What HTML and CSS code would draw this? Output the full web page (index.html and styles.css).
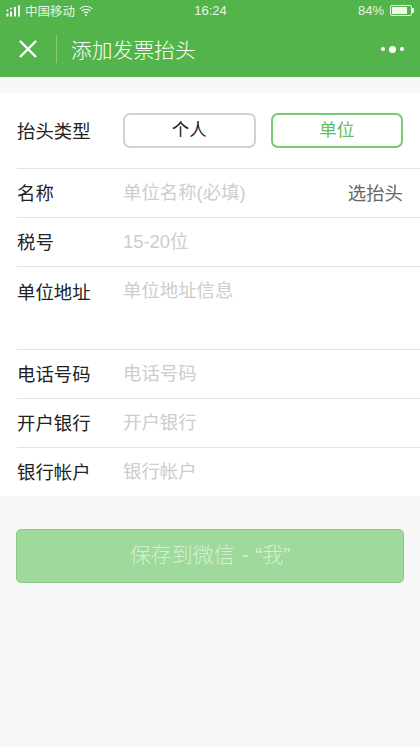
FILE: index.html
```html
<!DOCTYPE html>
<html lang="zh-CN">
<head>
  <meta charset="UTF-8">
  <meta name="viewport" content="width=device-width, initial-scale=1.0">
  <title>添加发票抬头</title>
  <link rel="stylesheet" href="styles.css">
</head>
<body>

  <div class="header">
    <div class="status-bar">
      <div class="status-left">
        <svg class="signal" width="15" height="12" viewBox="0 0 15 12">
          <rect x="0.5" y="8.5" width="2" height="3" fill="#fff"/>
          <circle cx="1.5" cy="5.5" r="1" fill="#fff"/>
          <rect x="4" y="6.5" width="2" height="5" fill="#fff"/>
          <circle cx="5" cy="3.5" r="1" fill="#fff"/>
          <rect x="8" y="2" width="2" height="9.5" fill="#fff"/>
          <rect x="12" y="0.5" width="2" height="11" fill="#fff"/>
        </svg>
        <span>中国移动</span>
        <svg class="wifi" width="14" height="12" viewBox="0 0 14 12" fill="none" stroke="#fff" stroke-width="1.1">
          <path d="M0.8 3.8C4.3 0.4 9.7 0.4 13.2 3.8"/>
          <path d="M2.8 6C5.2 3.7 8.8 3.7 11.2 6"/>
          <path d="M4.9 8.1C6.1 7 7.9 7 9.1 8.1"/>
          <circle cx="7" cy="10.2" r="0.9" fill="#fff" stroke="none"/>
        </svg>
      </div>
      <div class="status-time">16:24</div>
      <div class="status-right">
        <span>84%</span>
        <div class="battery"><div class="battery-level"></div></div>
      </div>
    </div>
    <div class="nav-bar">
      <svg class="close-icon" width="18" height="18" viewBox="0 0 18 18" stroke="#fff" stroke-width="2.4">
        <path d="M1 1L17 17M17 1L1 17"/>
      </svg>
      <div class="nav-divider"></div>
      <div class="nav-title">添加发票抬头</div>
      <div class="more-dots">
        <span class="dot"></span>
        <span class="dot dot-big"></span>
        <span class="dot"></span>
      </div>
    </div>
  </div>

  <form class="form">
    <div class="row row-type">
      <div class="label">抬头类型</div>
      <div class="type-buttons">
        <div class="type-btn">个人</div>
        <div class="type-btn type-btn-active">单位</div>
      </div>
    </div>
    <div class="row">
      <div class="label">名称</div>
      <div class="placeholder">单位名称(必填)</div>
      <div class="pick-link">选抬头</div>
    </div>
    <div class="row">
      <div class="label">税号</div>
      <div class="placeholder">15-20位</div>
    </div>
    <div class="row row-address">
      <div class="label">单位地址</div>
      <div class="placeholder">单位地址信息</div>
    </div>
    <div class="row">
      <div class="label">电话号码</div>
      <div class="placeholder">电话号码</div>
    </div>
    <div class="row">
      <div class="label">开户银行</div>
      <div class="placeholder">开户银行</div>
    </div>
    <div class="row">
      <div class="label">银行帐户</div>
      <div class="placeholder">银行帐户</div>
    </div>
  </form>

  <div class="save-wrap">
    <div class="save-button">保存到微信 <span class="save-dash">-</span> “我”</div>
  </div>

</body>
</html>
```

FILE: styles.css
```css
* {
  box-sizing: border-box;
}
html, body {
  font-family: "Liberation Sans", "Noto Sans CJK SC", sans-serif;
}
body {
  background-color: #f8f8f8;
  margin: 0;
  height: 747px;
  overflow: hidden;
}
.header {
  background-color: #53b44b;
  height: 77px;
  color: white;
}
.status-bar {
  height: 24px;
  display: flex;
  justify-content: space-between;
  align-items: center;
  padding: 0 7px 3px 6px;
  font-size: 12.5px;
  color: #e6f4e4;
}
.status-left {
  display: flex;
  align-items: center;
  gap: 4px;
  width: 140px;
}
.status-time {
  font-size: 13px;
  margin-left: 2px;
}
.status-right {
  display: flex;
  align-items: center;
  justify-content: flex-end;
  gap: 6px;
  width: 140px;
  font-size: 13px;
}
.battery {
  position: relative;
  width: 22px;
  height: 11px;
  margin-right: 1px;
  border: 1px solid #e6f4e4;
  border-radius: 2px;
  padding: 1px;
}
/* 电池正极 */
.battery:after {
  content: "";
  position: absolute;
  top: 2px;
  right: -3px;
  width: 1.5px;
  height: 5px;
  background-color: #e6f4e4;
}
.battery-level {
  width: 84%;
  height: 100%;
  background-color: #eef8ec;
}
.nav-bar {
  height: 53px;
  display: flex;
  align-items: center;
  padding: 0 16px 3px 19px;
}
.close-icon {
  flex-shrink: 0;
}
.nav-divider {
  width: 1px;
  height: 28px;
  background-color: #86ca80;
  margin: 0 14px 0 19px;
}
.nav-title {
  font-size: 20.8px;
  font-weight: 300;
  flex: 1;
}
.more-dots {
  display: flex;
  align-items: center;
  gap: 4px;
}
.dot {
  width: 4px;
  height: 4px;
  border-radius: 50%;
  background-color: white;
}
.dot-big {
  width: 7px;
  height: 7px;
}
.form {
  background-color: white;
  margin-top: 16px;
  padding-left: 17px;
  height: 403px;
}
.row {
  display: flex;
  align-items: center;
  height: 49px;
  padding: 0 17px 2px 0;
  border-bottom: 1px solid #e2e2e2;
  font-size: 18.4px;
}
.row:last-child {
  border-bottom: none;
  height: 48px;
}
.row-type {
  height: 76px;
  padding-bottom: 0;
}
.row-type .label {
  margin-bottom: 2px;
}
.row-address {
  height: 83px;
  align-items: flex-start;
  padding-top: 9px;
}
.row-address .label {
  margin-top: 2px;
}
.label {
  width: 106px;
  flex-shrink: 0;
  color: #222;
}
.placeholder {
  flex: 1;
  margin-bottom: 2px;
  color: #cdcdcd;
}
.pick-link {
  color: #666;
}
.type-buttons {
  flex: 1;
  display: flex;
  gap: 15px;
}
.type-btn {
  flex: 1;
  height: 35px;
  line-height: 31px;
  text-align: center;
  border: 2px solid #d2d2d2;
  border-radius: 7px;
  font-size: 17.5px;
  color: #222;
}
.type-btn-active {
  border-color: #7ac974;
  color: #62bd5a;
}
.save-wrap {
  padding: 33px 16px 0;
}
.save-button {
  height: 54px;
  line-height: 50px;
  text-align: center;
  background-color: #9fd99c;
  border: 1px solid #8cc88a;
  border-radius: 5px;
  font-size: 21px;
  font-weight: 300;
  color: #d6efd4;
}
.save-dash {
  margin: 0 1px;
}
```
